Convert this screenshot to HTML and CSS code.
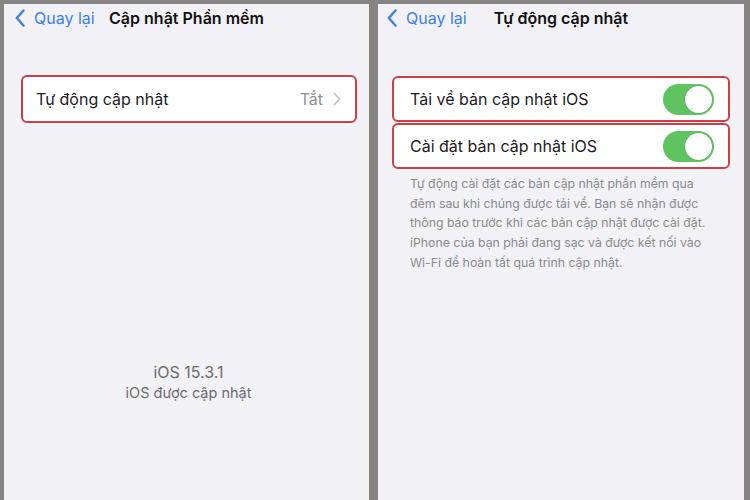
FILE: index.html
```html
<!DOCTYPE html>
<html lang="vi">
<head>
  <meta charset="UTF-8">
  <meta name="viewport" content="width=device-width, initial-scale=1.0">
  <title>Cập nhật Phần mềm</title>
  <link rel="stylesheet" href="styles.css">
</head>
<body>
  <!-- Left screen -->
  <div class="screen screen-left">
    <div class="navbar">
      <a href="#" class="back">
        <svg class="chevron" viewBox="0 0 10 18" width="10" height="18">
          <polyline points="8.5,1.5 1.8,9 8.5,16.5" />
        </svg>
        <span>Quay lại</span>
      </a>
      <div class="title">Cập nhật Phần mềm</div>
      <div></div>
    </div>

    <div class="cell cell-big highlight">
      <span class="label">Tự động cập nhật</span>
      <span class="detail">Tắt</span>
      <svg class="disclosure" viewBox="0 0 8 14" width="8" height="14">
        <polyline points="1.5,1.5 6.5,7 1.5,12.5" />
      </svg>
    </div>

    <div class="version">
      <div class="version-num">iOS 15.3.1</div>
      <div class="version-note">iOS được cập nhật</div>
    </div>
  </div>

  <!-- Right screen -->
  <div class="screen screen-right">
    <div class="navbar">
      <a href="#" class="back">
        <svg class="chevron" viewBox="0 0 10 18" width="10" height="18">
          <polyline points="8.5,1.5 1.8,9 8.5,16.5" />
        </svg>
        <span>Quay lại</span>
      </a>
      <div class="title">Tự động cập nhật</div>
      <div></div>
    </div>

    <div class="group">
      <div class="cell highlight">
        <span class="label">Tải về bản cập nhật iOS</span>
        <span class="toggle"><span class="knob"></span></span>
      </div>
      <div class="cell highlight">
        <span class="label">Cài đặt bản cập nhật iOS</span>
        <span class="toggle"><span class="knob"></span></span>
      </div>
    </div>

    <p class="footer">
      Tự động cài đặt các bản cập nhật phần mềm qua<br>
      đêm sau khi chúng được tải về. Bạn sẽ nhận được<br>
      thông báo trước khi các bản cập nhật được cài đặt.<br>
      iPhone của bạn phải đang sạc và được kết nối vào<br>
      Wi-Fi để hoàn tất quá trình cập nhật.
    </p>
  </div>
</body>
</html>
```

FILE: styles.css
```css
/* Global */
html, body {
  height: 100%;
}

body {
  margin: 0;
  padding: 4px 6px 0 4px;
  box-sizing: border-box;
  background-color: #858482;
  display: flex;
  gap: 9px;
  font-family: 'Inter', 'Roboto', sans-serif;
  color: #1c1c1e;
  overflow: hidden;
}

/* Phone screens */
.screen {
  background-color: #f1f1f6;
  display: flex;
  flex-direction: column;
}

.screen-left {
  width: 365px;
}

.screen-right {
  width: 366px;
}

/* Navigation bar */
.navbar {
  display: grid;
  grid-template-columns: 1fr auto 1fr;
  align-items: center;
  height: 28px;
}

.back {
  display: flex;
  align-items: center;
  gap: 9px;
  color: #3d7fe6;
  text-decoration: none;
  font-size: 16px;
}

.screen-left .back {
  padding-left: 11px;
}

.screen-right .back {
  padding-left: 9px;
}

.chevron polyline {
  fill: none;
  stroke: #3d7fe6;
  stroke-width: 2.4;
  stroke-linecap: round;
  stroke-linejoin: round;
}

.title {
  font-size: 16px;
  font-weight: 600;
  color: #111;
}

/* Cells */
.cell {
  background-color: #fff;
  display: flex;
  align-items: center;
  height: 42px;
  padding: 0 14px 0 16px;
  font-size: 16px;
}

.highlight {
  border: 2px solid #cf3e45;
  border-radius: 6px;
}

.cell-big {
  margin: 43px 12px 0 17px;
  height: 44px;
  padding-left: 13px;
}

.label {
  flex: 1;
}

.detail {
  color: #8e8e93;
  margin-right: 10px;
}

.disclosure polyline {
  fill: none;
  stroke: #c4c4c8;
  stroke-width: 1.8;
  stroke-linecap: round;
  stroke-linejoin: round;
}

/* Right screen list */
.group {
  margin: 44px 14px 0 14px;
  display: flex;
  flex-direction: column;
  gap: 1px;
}

.toggle {
  width: 51px;
  height: 31px;
  border-radius: 16px;
  background-color: #5fc35f;
  display: flex;
  align-items: center;
  justify-content: flex-end;
  padding: 2px;
  box-sizing: border-box;
}

.knob {
  width: 27px;
  height: 27px;
  border-radius: 50%;
  background-color: #fff;
  box-shadow: 0 0 0 0.5px rgba(0, 0, 0, 0.1);
}

.footer {
  margin: 5px 0 0 32px;
  font-size: 12.3px;
  line-height: 19.7px;
  color: #8a8a8f;
}

/* Version info */
.version {
  margin-top: 239px;
  text-align: center;
  color: #6c6c70;
  padding-left: 4px;
}

.version-num {
  font-size: 16px;
  line-height: 21px;
}

.version-note {
  font-size: 14.5px;
  line-height: 20px;
}
```
